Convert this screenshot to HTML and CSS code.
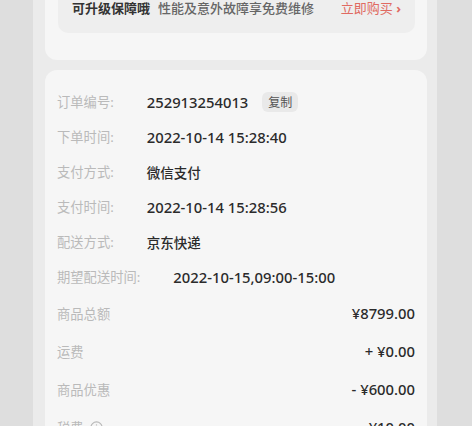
FILE: index.html
```html
<!DOCTYPE html>
<html lang="zh-CN">
<head>
  <meta charset="UTF-8" />
  <meta name="viewport" content="width=device-width, initial-scale=1.0" />
  <title>订单详情</title>
  <link rel="stylesheet" href="styles.css">
</head>
<body>
  <div class="screen">
    <div class="card top-card">
      <div class="promo">
        <span class="promo-title">可升级保障哦</span>
        <span class="promo-desc">性能及意外故障享免费维修</span>
        <span class="promo-link">立即购买 <b>›</b></span>
      </div>
    </div>

    <div class="card order-card">
      <div class="row">
        <span class="label">订单编号:</span>
        <span class="value num">252913254013</span>
        <span class="copy">复制</span>
      </div>
      <div class="row">
        <span class="label">下单时间:</span>
        <span class="value num">2022-10-14 15:28:40</span>
      </div>
      <div class="row">
        <span class="label">支付方式:</span>
        <span class="value">微信支付</span>
      </div>
      <div class="row">
        <span class="label">支付时间:</span>
        <span class="value num">2022-10-14 15:28:56</span>
      </div>
      <div class="row">
        <span class="label">配送方式:</span>
        <span class="value">京东快递</span>
      </div>
      <div class="row">
        <span class="label">期望配送时间:</span>
        <span class="value num">2022-10-15,09:00-15:00</span>
      </div>

      <div class="row price">
        <span class="label">商品总额</span>
        <span class="value num">¥8799.00</span>
      </div>
      <div class="row price">
        <span class="label">运费</span>
        <span class="value num">+ ¥0.00</span>
      </div>
      <div class="row price">
        <span class="label">商品优惠</span>
        <span class="value num">- ¥600.00</span>
      </div>
      <div class="row price">
        <span class="label">税费
          <svg class="info" width="13" height="13" viewBox="0 0 13 13"><circle cx="6.5" cy="6.5" r="5.6" fill="none" stroke="#b8b8b8" stroke-width="1.1"/><path d="M6.5 5.6v3.8" stroke="#b8b8b8" stroke-width="1.2"/><circle cx="6.5" cy="3.9" r="0.7" fill="#b8b8b8"/></svg>
        </span>
        <span class="value num">¥10.00</span>
      </div>
    </div>
  </div>
</body>
</html>
```

FILE: styles.css
```css
* { margin: 0; padding: 0; box-sizing: border-box; }
html, body {
  width: 100%; height: 100%; overflow: hidden;
  background: #dedede;
  font-family: "Noto Sans", "Noto Sans CJK SC", sans-serif;
}

.screen {
  margin: -30px 0 0 33px; width: 404px; min-height: 600px;
  padding: 0 10px 0 12px;
  background: #ebebeb;
}

.card { background: #f6f6f6; border-radius: 12px; }

.top-card { padding: 13px 12px 27px 13px; }
.promo {
  display: flex; align-items: center;
  padding: 15px 14px 15px; border-radius: 10px;
  background: #eeeeee; line-height: 20px; font-size: 13px;
}
.promo-title { font-weight: 700; color: #333; }
.promo-desc { margin-left: 8px; color: #666; font-weight: 500; }
.promo-link { margin-left: auto; color: #e06a62; }
.promo-link b { font-weight: 700; }

.order-card { margin-top: 10px; padding: 14px 12px 0 12px; }

.row { display: flex; align-items: center; height: 35px; }
.row.price { height: 38px; justify-content: space-between; }

.label {
  display: inline-flex; align-items: center; gap: 6px;
  margin-right: 33px; font-size: 13.3px; color: #bababa;
}
.row.price .label { margin-right: 0; }
.value { font-size: 13.5px; color: #2b2b2b; font-weight: 500; }
.value.num { font-size: 14.8px; }

.copy {
  display: inline-flex; align-items: center; height: 20px;
  margin-left: 14px; padding: 0 6px; border-radius: 6px;
  background: #e9e9e9; color: #555; font-size: 12px;
}
.info { display: block; }
```
